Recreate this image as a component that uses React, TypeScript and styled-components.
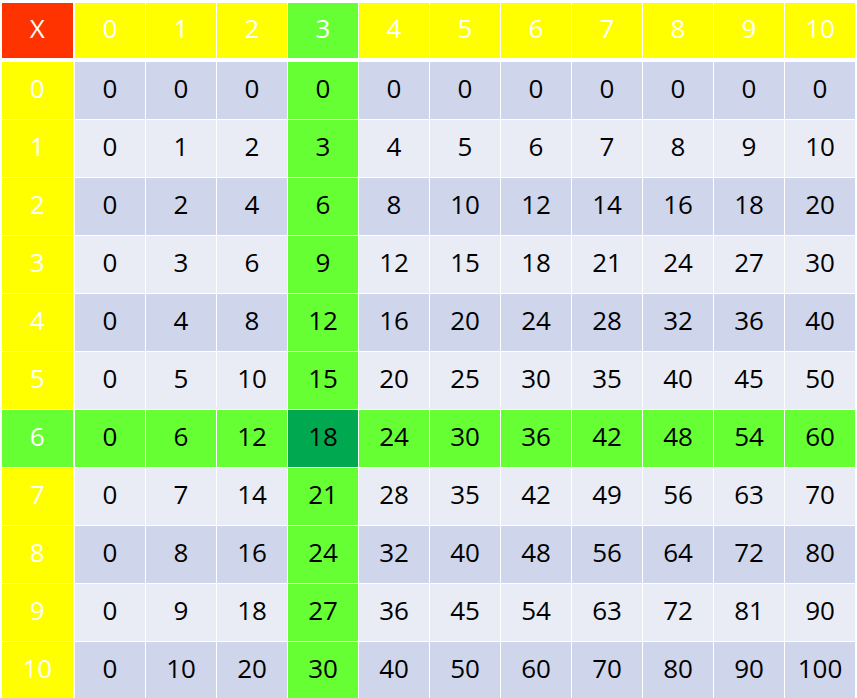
import React from 'react'
import styled, { createGlobalStyle } from 'styled-components'

type Tone = 'red' | 'yellow' | 'green' | 'deep' | 'dark' | 'light'

const tones: Record<Tone, string> = {
  red: '#FF3300',
  yellow: '#FFFF00',
  green: '#66FF33',
  deep: '#00A84F',
  dark: '#CFD5EA',
  light: '#E9EBF5',
}

const Global = createGlobalStyle`
  html, body {
    margin: 0;
    padding: 0;
    background: #fff;
    overflow: hidden;
  }
`

const Page = styled.div`
  padding: 3px 2px 0 2px;
  width: 857px;
  height: 698px;
  box-sizing: border-box;
  overflow: hidden;
`

const Table = styled.div`
  display: grid;
  grid-template-columns: 72px repeat(11, 1fr);
  grid-template-rows: 58px repeat(11, 57px);
  gap: 1px;
`

const Cell = styled.div<{ $tone: Tone; $white: boolean; $left: boolean; $top: boolean }>`
  display: flex;
  align-items: center;
  justify-content: center;
  background: ${({ $tone }) => tones[$tone]};
  color: ${({ $white }) => ($white ? '#fff' : '#000')};
  font-family: 'Open Sans', 'Liberation Sans', sans-serif;
  font-size: 26px;
  font-weight: 500;
  line-height: 1;
  padding-bottom: 5px;
  box-sizing: border-box;
  margin-right: ${({ $left }) => ($left ? '1.5px' : '0')};
  margin-bottom: ${({ $top }) => ($top ? '3px' : '0')};
`

const HI_COL = 3
const HI_ROW = 6
const nums = Array.from({ length: 11 }, (_, i) => i)

const App = () => {
  const cells: React.ReactNode[] = []

  cells.push(
    <Cell key="x" $tone="red" $white $left $top>
      X
    </Cell>
  )
  nums.forEach((c) => {
    cells.push(
      <Cell key={'h' + c} $tone={c === HI_COL ? 'green' : 'yellow'} $white $left={false} $top>
        {c}
      </Cell>
    )
  })

  nums.forEach((r) => {
    cells.push(
      <Cell key={'r' + r} $tone={r === HI_ROW ? 'green' : 'yellow'} $white $left $top={false}>
        {r}
      </Cell>
    )
    nums.forEach((c) => {
      let tone: Tone = r % 2 === 0 ? 'dark' : 'light'
      if (r === HI_ROW && c === HI_COL) tone = 'deep'
      else if (r === HI_ROW || c === HI_COL) tone = 'green'
      cells.push(
        <Cell key={r + '-' + c} $tone={tone} $white={false} $left={false} $top={false}>
          {r * c}
        </Cell>
      )
    })
  })

  return (
    <Page>
      <Global />
      <Table>{cells}</Table>
    </Page>
  )
}

export default App
